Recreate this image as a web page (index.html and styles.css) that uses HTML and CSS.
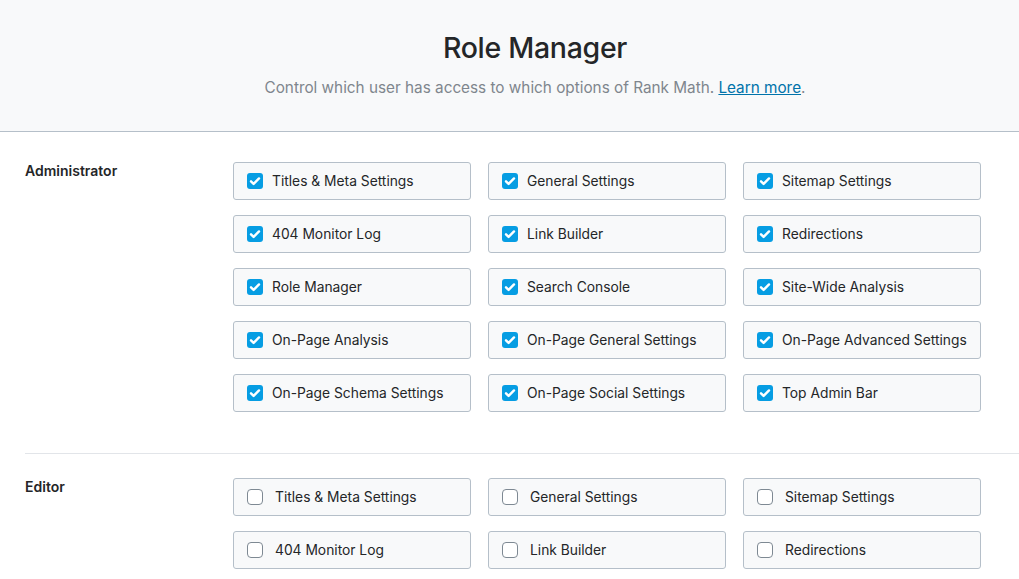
FILE: index.html
```html
<!DOCTYPE html>
<html lang="en">
<head>
  <meta charset="UTF-8" />
  <title>Role Manager</title>
  <link rel="stylesheet" href="styles.css">
</head>
<body>
  <div class="wrap">
    <div class="page-header">
      <h1>Role Manager</h1>
      <p>Control which user has access to which options of Rank Math. <a href="#">Learn more</a>.</p>
    </div>

    <div class="roles">
      <div class="role">
        <div class="role-name">Administrator</div>
        <div class="caps">
          <label class="cap"><span class="box checked"></span>Titles &amp; Meta Settings</label>
          <label class="cap"><span class="box checked"></span>General Settings</label>
          <label class="cap"><span class="box checked"></span>Sitemap Settings</label>
          <label class="cap"><span class="box checked"></span>404 Monitor Log</label>
          <label class="cap"><span class="box checked"></span>Link Builder</label>
          <label class="cap"><span class="box checked"></span>Redirections</label>
          <label class="cap"><span class="box checked"></span>Role Manager</label>
          <label class="cap"><span class="box checked"></span>Search Console</label>
          <label class="cap"><span class="box checked"></span>Site-Wide Analysis</label>
          <label class="cap"><span class="box checked"></span>On-Page Analysis</label>
          <label class="cap"><span class="box checked"></span>On-Page General Settings</label>
          <label class="cap"><span class="box checked"></span>On-Page Advanced Settings</label>
          <label class="cap"><span class="box checked"></span>On-Page Schema Settings</label>
          <label class="cap"><span class="box checked"></span>On-Page Social Settings</label>
          <label class="cap"><span class="box checked"></span>Top Admin Bar</label>
        </div>
      </div>

      <div class="role">
        <div class="role-name">Editor</div>
        <div class="caps">
          <label class="cap"><span class="box"></span>Titles &amp; Meta Settings</label>
          <label class="cap"><span class="box"></span>General Settings</label>
          <label class="cap"><span class="box"></span>Sitemap Settings</label>
          <label class="cap"><span class="box"></span>404 Monitor Log</label>
          <label class="cap"><span class="box"></span>Link Builder</label>
          <label class="cap"><span class="box"></span>Redirections</label>
        </div>
      </div>
    </div>
  </div>
</body>
</html>
```

FILE: styles.css
```css
* {
  box-sizing: border-box;
}

body {
  margin: 0;
  background: #fff;
  color: #242628;
  font-family: Inter, "Noto Sans", sans-serif;
  overflow: hidden;
}

.wrap {
  width: 1070px;
}

.page-header {
  background: #f8f9fa;
  border-bottom: 1px solid #b5bfc9;
  height: 132px;
  text-align: center;
  padding-top: 29px;
}

.page-header h1 {
  margin: 0;
  font-size: 28.5px;
  font-weight: 500;
  line-height: 38px;
  color: #242628;
  letter-spacing: -0.3px;
}

.page-header p {
  margin: 9px 0 0;
  font-size: 15.3px;
  line-height: 24px;
  color: #7f868d;
}

.page-header a {
  color: #0073aa;
}

.roles {
  padding: 0 25px;
}

.role {
  display: flex;
  padding: 24px 0 26px;
  border-top: 1px solid #e2e5e9;
}

.role:first-child {
  border-top: none;
  padding-top: 30px;
}

.role-name {
  width: 208px;
  flex-shrink: 0;
  font-size: 14px;
  font-weight: 600;
  color: #242628;
}

.caps {
  display: grid;
  grid-template-columns: repeat(3, 238px);
  column-gap: 17px;
  row-gap: 15px;
  align-content: start;
  padding-bottom: 15px;
}

.cap {
  height: 38px;
  display: flex;
  align-items: center;
  padding-left: 13px;
  padding-bottom: 1px;
  background: #f8f9fa;
  border: 1px solid #b5bfc9;
  border-radius: 3px;
  font-size: 13.8px;
  color: #242628;
}

.box {
  width: 16px;
  height: 16px;
  margin-right: 9px;
  border: 1px solid #7e8993;
  border-radius: 4px;
  background: #fff;
  flex-shrink: 0;
}

.box:not(.checked) {
  margin-right: 12px;
}

.box.checked {
  border: none;
  border-radius: 3px;
  background: #069de3 url("data:image/svg+xml,%3Csvg xmlns='http://www.w3.org/2000/svg' viewBox='0 0 16 16'%3E%3Cpath d='M4 8.3l2.6 2.6L12 5.4' fill='none' stroke='%23fff' stroke-width='2.4' stroke-linecap='round' stroke-linejoin='round'/%3E%3C/svg%3E") center / 16px 16px no-repeat;
}
```
